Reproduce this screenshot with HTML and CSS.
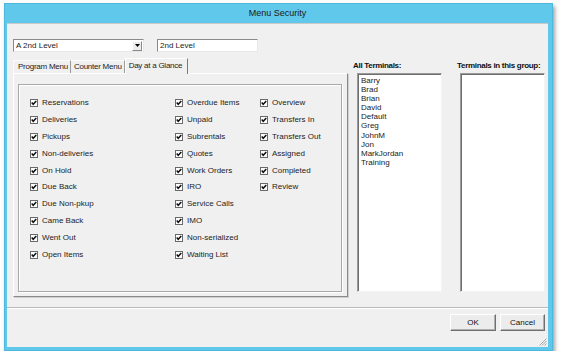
FILE: index.html
```html
<!DOCTYPE html>
<html>
<head>
<meta charset="utf-8">
<link rel="stylesheet" href="styles.css">
</head>
<body>
<svg class="defs" width="0" height="0">
  <symbol id="chk" viewBox="0 0 8 8">
    <rect x="0.5" y="0.5" width="7" height="7" fill="#fff" stroke="#6a6a6a"/>
    <polyline points="1.7,3.6 3.2,5.3 6.3,1.9" fill="none" stroke="#111" stroke-width="1.5"/>
  </symbol>
</svg>
<div class="window">
  <div class="titlebar">Menu Security</div>
  <div class="content">
    <div class="main">
      <div class="left">
        <div class="fields">
          <div class="combo"><span class="combo-text">A 2nd Level</span><span class="combo-btn"><svg width="5" height="3" viewBox="0 0 5 3"><polygon points="0,0 5,0 2.5,3" fill="#000"/></svg></span></div>
          <div class="textbox">2nd Level</div>
        </div>
        <div class="tabs">
          <div class="tab">Program Menu</div>
          <div class="tab">Counter Menu</div>
          <div class="tab active">Day at a Glance</div>
        </div>
        <div class="tabpanel">
          <div class="group">
            <div class="checks">
              <label class="check"><svg class="cb"><use href="#chk"/></svg><span>Reservations</span></label>
              <label class="check"><svg class="cb"><use href="#chk"/></svg><span>Deliveries</span></label>
              <label class="check"><svg class="cb"><use href="#chk"/></svg><span>Pickups</span></label>
              <label class="check"><svg class="cb"><use href="#chk"/></svg><span>Non-deliveries</span></label>
              <label class="check"><svg class="cb"><use href="#chk"/></svg><span>On Hold</span></label>
              <label class="check"><svg class="cb"><use href="#chk"/></svg><span>Due Back</span></label>
              <label class="check"><svg class="cb"><use href="#chk"/></svg><span>Due Non-pkup</span></label>
              <label class="check"><svg class="cb"><use href="#chk"/></svg><span>Came Back</span></label>
              <label class="check"><svg class="cb"><use href="#chk"/></svg><span>Went Out</span></label>
              <label class="check"><svg class="cb"><use href="#chk"/></svg><span>Open Items</span></label>
              <label class="check"><svg class="cb"><use href="#chk"/></svg><span>Overdue Items</span></label>
              <label class="check"><svg class="cb"><use href="#chk"/></svg><span>Unpaid</span></label>
              <label class="check"><svg class="cb"><use href="#chk"/></svg><span>Subrentals</span></label>
              <label class="check"><svg class="cb"><use href="#chk"/></svg><span>Quotes</span></label>
              <label class="check"><svg class="cb"><use href="#chk"/></svg><span>Work Orders</span></label>
              <label class="check"><svg class="cb"><use href="#chk"/></svg><span>IRO</span></label>
              <label class="check"><svg class="cb"><use href="#chk"/></svg><span>Service Calls</span></label>
              <label class="check"><svg class="cb"><use href="#chk"/></svg><span>IMO</span></label>
              <label class="check"><svg class="cb"><use href="#chk"/></svg><span>Non-serialized</span></label>
              <label class="check"><svg class="cb"><use href="#chk"/></svg><span>Waiting List</span></label>
              <label class="check"><svg class="cb"><use href="#chk"/></svg><span>Overview</span></label>
              <label class="check"><svg class="cb"><use href="#chk"/></svg><span>Transfers In</span></label>
              <label class="check"><svg class="cb"><use href="#chk"/></svg><span>Transfers Out</span></label>
              <label class="check"><svg class="cb"><use href="#chk"/></svg><span>Assigned</span></label>
              <label class="check"><svg class="cb"><use href="#chk"/></svg><span>Completed</span></label>
              <label class="check"><svg class="cb"><use href="#chk"/></svg><span>Review</span></label>
            </div>
          </div>
        </div>
      </div>
      <div class="right">
        <div class="term-col col-a">
          <div class="term-label">All Terminals:</div>
          <div class="listbox">
            <div>Barry</div>
            <div>Brad</div>
            <div>Brian</div>
            <div>David</div>
            <div>Default</div>
            <div>Greg</div>
            <div>JohnM</div>
            <div>Jon</div>
            <div>MarkJordan</div>
            <div>Training</div>
          </div>
        </div>
        <div class="term-col col-b">
          <div class="term-label">Terminals in this group:</div>
          <div class="listbox"></div>
        </div>
      </div>
    </div>
    <div class="separator"></div>
    <div class="buttons">
      <div class="btn btn-ok">OK</div>
      <div class="btn btn-cancel">Cancel</div>
    </div>
    <svg class="grip" width="8" height="8" viewBox="0 0 8 8">
      <g stroke="#a8a8a8" stroke-width="1">
        <line x1="7.5" y1="0.5" x2="0.5" y2="7.5"/>
        <line x1="7.5" y1="3" x2="3" y2="7.5"/>
        <line x1="7.5" y1="5.5" x2="5.5" y2="7.5"/>
      </g>
    </svg>
  </div>
</div>
</body>
</html>
```

FILE: styles.css
```css
* { box-sizing: border-box; }
html, body { margin: 0; padding: 0; background: #ffffff; }
body {
  font-family: "Liberation Sans", Arial, sans-serif;
  font-size: 8px;
  color: #1c1c1c;
}
.defs { position: absolute; width: 0; height: 0; }

.window {
  margin: 3px 0 0 4px;
  width: 549px;
  height: 348px;
  background: #60c8eb;
  border: 1px solid #4fb6dc;
  box-shadow: 2px 3px 4px rgba(0, 0, 0, 0.38);
  display: flex;
  flex-direction: column;
  padding: 0 4px 3px 2px;
}
.titlebar {
  height: 19px;
  line-height: 19px;
  text-align: center;
  font-size: 9px;
  color: #1a1a1a;
  flex: none;
}
.content {
  flex: 1;
  background: #f0f0f0;
  border-top: 1px solid #c9c9c9;
  position: relative;
  display: flex;
  flex-direction: column;
}

.main {
  display: flex;
  padding-left: 6px;
}
.left {
  width: 335px;
  display: flex;
  flex-direction: column;
}
.fields {
  display: flex;
  margin-top: 15px;
  height: 13px;
}
.combo {
  width: 131px;
  height: 13px;
  background: #fff;
  border: 1px solid;
  border-color: #8a8a8a #e8e8e8 #e8e8e8 #8a8a8a;
  display: flex;
  align-items: center;
  justify-content: space-between;
  padding: 0 1px 0 2px;
}
.combo-text, .textbox { line-height: 11px; }
.combo-btn {
  width: 10px;
  height: 10px;
  background: #ececec;
  border: 1px solid;
  border-color: #fff #8a8a8a #8a8a8a #fff;
  display: flex;
  align-items: center;
  justify-content: center;
}
.combo-btn svg { display: block; }
.textbox {
  margin-left: 13px;
  width: 101px;
  height: 13px;
  background: #fff;
  border: 1px solid;
  border-color: #8a8a8a #e8e8e8 #e8e8e8 #8a8a8a;
  padding: 0 2px;
}

.tabs {
  display: flex;
  align-items: flex-end;
  margin-top: 5px;
  height: 16px;
  position: relative;
  z-index: 1;
}
.tab {
  height: 13px;
  line-height: 12px;
  padding: 0 2px 0 3px;
  letter-spacing: -0.25px;
  border-top: 1px solid #fafafa;
  border-right: 1px solid #9a9a9a;
  color: #1c1c1c;
}
.tab:first-child { padding-left: 4px; border-left: 1px solid #fafafa; }
.tab.active {
  height: 16px;
  line-height: 14px;
  padding: 0 5px 0 3px;
  background: #f0f0f0;
  border-top: 1px solid #ffffff;
  border-left: 1px solid #ffffff;
  border-right: 1px solid #7a7a7a;
  margin-bottom: -1px;
}
.tabpanel {
  height: 224px;
  border: 1px solid;
  border-color: #ffffff #8a8a8a #8a8a8a #ffffff;
  box-shadow: 1px 1px 0 #d0d0d0;
  padding: 10px 5px 4px 4px;
  display: flex;
}
.group {
  flex: 1;
  border: 1px solid #a8a8a8;
  box-shadow: inset 1px 1px 0 #ffffff, 1px 1px 0 #ffffff;
  padding: 10px 0 0 11px;
}
.checks {
  display: grid;
  grid-template-columns: 145px 85px auto;
  grid-template-rows: repeat(10, 16.8px);
  grid-auto-flow: column;
}
.check {
  display: flex;
  align-items: center;
}
.cb {
  width: 8px;
  height: 8px;
  flex: none;
  display: block;
}
.check span {
  margin-left: 4px;
  line-height: 10px;
}

.right {
  display: flex;
  margin-left: 5px;
  margin-top: 37px;
}
.term-col {
  display: flex;
  flex-direction: column;
}
.col-a { width: 104px; }
.col-b { width: 90px; }
.term-label {
  font-weight: bold;
  height: 12px;
  line-height: 10px;
  color: #111;
  white-space: nowrap;
  letter-spacing: -0.3px;
}
.listbox {
  height: 219px;
  background: #ffffff;
  border: 1px solid;
  border-color: #9a9a9a #f4f4f4 #f4f4f4 #9a9a9a;
  box-shadow: inset 1px 1px 0 #6e6e6e;
  padding: 2px 0 0 3px;
  line-height: 9.1px;
  color: #1a1a1a;
}
.col-a .listbox { width: 85px; margin-left: 4px; }
.col-b .listbox { width: 85px; margin-left: 3px; }

.separator {
  margin-top: 10px;
  height: 2px;
  border-top: 1px solid #b9b9b9;
  border-bottom: 1px solid #ffffff;
}
.buttons {
  display: flex;
  justify-content: flex-end;
  gap: 4px;
  margin-top: 5px;
  padding-right: 3px;
}
.btn {
  height: 17px;
  line-height: 15px;
  text-align: center;
  background: #ececec;
  border: 1px solid;
  border-color: #ffffff #6f6f6f #6f6f6f #ffffff;
  box-shadow: inset -1px -1px 0 #b0b0b0;
  color: #111;
}
.btn-ok { width: 46px; }
.btn-cancel { width: 45px; }

.grip {
  position: absolute;
  right: 1px;
  bottom: 1px;
}
```
